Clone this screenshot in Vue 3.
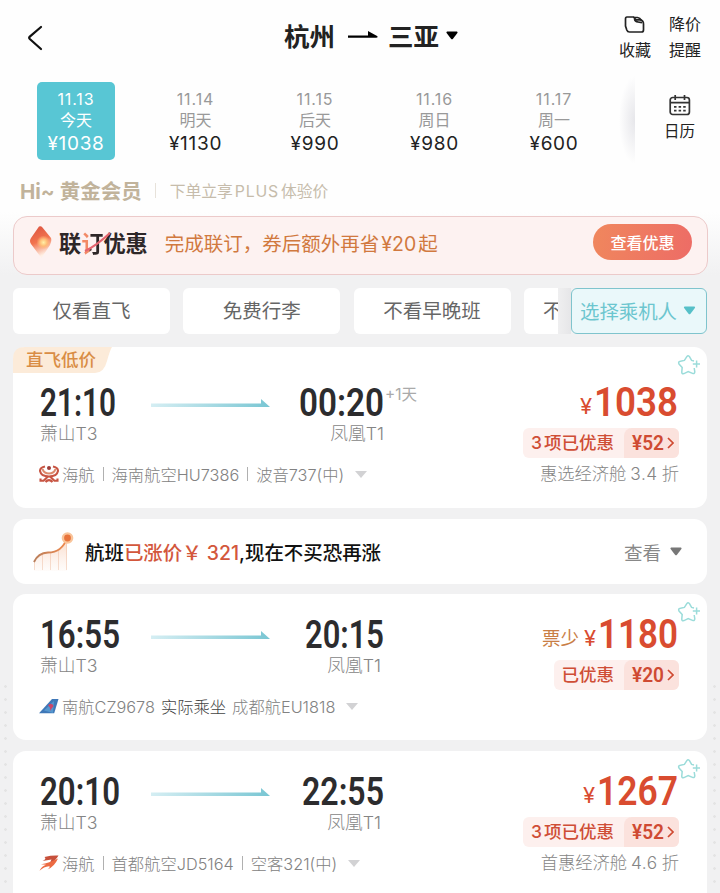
<template>
  <div class="page">
    <header class="header">
      <svg class="back" viewBox="0 0 16 26"><path d="M14 2 L2.8 11.6 Q1.6 12.8 2.8 14 L14 24" /></svg>
      <div class="route">
        <span>杭州</span>
        <svg class="route-arrow" viewBox="0 0 30 10"><path d="M0 5.4 H20 V1 L29.5 6.2 Q30 7.8 28 7.8 H0 Z" /></svg>
        <span>三亚</span>
        <svg class="route-caret" viewBox="0 0 12 9"><path d="M1 0.5 H11 Q12 1 11.4 2 L7 7.8 Q6 8.8 5 7.8 L0.6 2 Q0 1 1 0.5 Z" /></svg>
      </div>
      <div class="actions">
        <div class="action">
          <svg class="folder" viewBox="0 0 21 17">
            <path d="M3 1 H9.5 L12 3.8 H16 Q19.5 4 19.5 8 V14 Q19.5 16 17.5 16 H5.5 Q3.5 16 2.8 14 L1.5 10 V3 Q1.5 1 3 1 Z" />
            <path d="M9.5 1.5 H13.5 Q16 1.6 17.5 4.4 M10.5 3 Q11 5.5 14 6 L18 6.6" />
          </svg>
          <span>收藏</span>
        </div>
        <div class="action"><span>降价</span><span>提醒</span></div>
      </div>
    </header>

    <div class="dates">
      <div v-for="d in dates" :key="d.date" class="date" :class="{ active: d.active }">
        <span class="date-day">{{ d.date }}</span>
        <span class="date-week">{{ d.week }}</span>
        <span class="date-price">¥{{ d.price }}</span>
      </div>
      <div class="date-shadow"></div>
      <div class="calendar">
        <svg viewBox="0 0 22 22">
          <rect x="1.2" y="3.5" width="19.2" height="17" rx="2.5" />
          <path d="M1.2 8.7 H20.4 M6.2 1 V6 M15.5 1 V6" />
          <path d="M5 12.8 H7.5 M9.6 12.8 H12.1 M14.2 12.8 H16.7 M5 16.6 H7.5 M9.6 16.6 H12.1 M14.2 16.6 H16.7" />
        </svg>
        <span>日历</span>
      </div>
    </div>

    <div class="member">
      <span class="member-level">Hi~ 黄金会员</span>
      <i class="member-line"></i>
      <span class="member-tip">下单立享<em>PLUS</em>体验价</span>
    </div>

    <div class="promo">
      <svg class="promo-icon" viewBox="0 0 24 34">
        <defs>
          <linearGradient id="gem" x1="0" y1="0" x2="0.3" y2="1">
            <stop offset="0" stop-color="#d9503f" />
            <stop offset="0.55" stop-color="#f2744f" />
            <stop offset="1" stop-color="#fff1e6" />
          </linearGradient>
          <radialGradient id="glow">
            <stop offset="0" stop-color="#fff0a8" />
            <stop offset="0.5" stop-color="#ffbd76" />
            <stop offset="1" stop-color="#ffb27a" stop-opacity="0" />
          </radialGradient>
        </defs>
        <path d="M10 1.5 Q12 0.5 13.5 2.5 L22 13 Q23 16 21 20 L12.5 33 L2 19 Q0 16 2 13 Z" fill="url(#gem)" />
        <circle cx="14.5" cy="17.5" r="7" fill="url(#glow)" />
      </svg>
      <div class="promo-brand">
        <span>联</span><span class="brand-hot">订</span><span>优惠</span>
        <svg class="brand-slash" viewBox="0 0 28 20"><path d="M1 19 Q12 14 26 1" /></svg>
      </div>
      <span class="promo-text">完成联订，券后额外再省<em>¥20</em>起</span>
      <button class="promo-btn">查看优惠</button>
    </div>

    <div class="filters">
      <div class="filter-scroll">
        <span v-for="f in filters" :key="f" class="filter">{{ f }}</span>
        <span class="filter filter-cut">不</span>
      </div>
      <div class="filter-fade"></div>
      <div class="passenger">
        <span>选择乘机人</span>
        <svg viewBox="0 0 12 9"><path d="M1 0.5 H11 Q12 1 11.4 2 L7 7.8 Q6 8.8 5 7.8 L0.6 2 Q0 1 1 0.5 Z" /></svg>
      </div>
    </div>

    <div class="list">
      <template v-for="f in flights" :key="f.id">
        <div class="card" :class="{ tagged: f.tag, last: f.last }">
          <div v-if="f.tag" class="tag">
            <svg viewBox="0 0 100 26" preserveAspectRatio="none"><path d="M0 12 Q0 0 12 0 H99 Q97 3 94 14 Q91 26 82 26 H0 Z" /></svg>
            <span>{{ f.tag }}</span>
          </div>
          <svg class="star" viewBox="0 0 24 22">
            <path d="M17.2 14 L17.8 17.8 Q17.8 20.2 15.5 19.4 L11.2 17.6 L7 19.6 Q4.4 20.2 4.8 17.6 L5.2 13.4 L2 10 Q0.8 7.6 3.4 7.2 L7.4 6.4 L9.8 2.6 Q11.2 0.8 12.6 2.8 L14.6 6.4 L17 7" />
            <path d="M15.8 10 H23 M19.6 6.4 V13.4" />
          </svg>

          <div class="trip">
            <div class="times">
              <svg class="num depart" height="34" :width="f.departWidth"><text x="0" y="32" :textLength="f.departWidth" lengthAdjust="spacingAndGlyphs">{{ f.depart }}</text></svg>
              <svg class="arrow" viewBox="0 0 119 10">
                <defs>
                  <linearGradient :id="'line' + f.id" x1="0" y1="0" x2="1" y2="0">
                    <stop offset="0" stop-color="#d5eef3" />
                    <stop offset="1" stop-color="#79c6d3" />
                  </linearGradient>
                </defs>
                <path d="M0 5.5 H110 V1 L119 9 H0 Z" :fill="`url(#line${f.id})`" />
              </svg>
              <div class="arrive">
                <svg class="num" height="34" :width="f.arriveWidth"><text x="0" y="32" :textLength="f.arriveWidth" lengthAdjust="spacingAndGlyphs">{{ f.arrive }}</text></svg>
                <span v-if="f.nextDay" class="next-day">{{ f.nextDay }}</span>
              </div>
            </div>
            <div class="airports" :class="{ inset: !f.nextDay }"><span>萧山T3</span><span>凤凰T1</span></div>
            <div class="airline">
              <svg v-if="f.logo === 'hainan'" class="logo" viewBox="0 0 20 18">
                <g fill="none" stroke="#c85543" stroke-width="2.1">
                  <path d="M6 1.5 Q1 2.5 1 6 Q2 11.5 10 11.5 Q18 11.5 19 6 Q19 2.5 14 1.5" />
                  <path d="M3.5 4 Q5 8.5 10 8.5 Q15 8.5 16.5 4" stroke="#dc8a6c" />
                  <path d="M9 11.5 L4.5 15.8 H1.5 V13.5 M11 11.5 L15.5 15.8 H18.5 V13.5 M6.5 17 Q10 13.2 13.5 17" />
                </g>
                <circle cx="10" cy="3" r="2" fill="#9c3c38" />
              </svg>
              <svg v-else-if="f.logo === 'southern'" class="logo" viewBox="0 0 20 18">
                <path d="M0 16.2 L13 2 H19.5 L15.2 16.2 Z" fill="#3f78b8" />
                <path d="M5 13.5 L15 4 L14 16 Z" fill="#5597cf" />
                <path d="M9 8.5 Q11 5.4 13.6 7.6 Q15.5 9 13 11 L11 14 Q11.8 10 9 8.5 Z" fill="#cb4669" />
              </svg>
              <svg v-else class="logo" viewBox="0 0 20 18">
                <path d="M5.5 3 Q13 1.2 19.5 1.6 Q16 8 9 11 Q12 7.8 12.5 5.6 L3.5 7 Q8 4.8 5.5 3 Z" fill="#c7503b" />
                <path d="M2 10.2 Q10 9 19 4.5 Q15.5 12.5 8.5 15.5 Q12 12.6 10 12.2 Q5 12.6 0.5 16.8 Q2.6 12.2 7 10.8 Z" fill="#ec6a42" />
              </svg>
              <template v-for="(s, i) in f.segments" :key="i">
                <i v-if="s.line" class="bar"></i>
                <span :class="{ dark: s.dark, gap: s.gap }">{{ s.text }}</span>
              </template>
              <i class="small-caret"></i>
            </div>
          </div>

          <div class="fare">
            <div class="price">
              <span v-if="f.few" class="few">{{ f.few }}</span>
              <span class="yen">¥</span>
              <svg class="num price-num" height="36" :width="f.priceWidth"><text x="0" y="32" :textLength="f.priceWidth" lengthAdjust="spacingAndGlyphs">{{ f.price }}</text></svg>
            </div>
            <div class="discount">
              <span class="discount-label"><em v-if="f.count">{{ f.count }}</em>{{ f.label }}</span>
              <span class="discount-value">
                <svg class="num" width="33" height="20"><text x="0" y="17" textLength="32" lengthAdjust="spacingAndGlyphs">¥{{ f.off }}</text></svg>
                <svg class="chevron" viewBox="0 0 7 12"><path d="M1 1 L6 6 L1 11" /></svg>
              </span>
            </div>
            <div v-if="f.cabin" class="cabin">{{ f.cabin }}<em>{{ f.rate }}</em>折</div>
          </div>
        </div>

        <div v-if="f.alert" class="card alert">
          <svg class="trend" viewBox="0 0 42 42">
            <defs>
              <linearGradient id="rise" x1="0" y1="0" x2="0" y2="1">
                <stop offset="0" stop-color="#f3b08a" stop-opacity="0.7" />
                <stop offset="1" stop-color="#f8d3bd" stop-opacity="0.1" />
              </linearGradient>
              <linearGradient id="stroke" x1="0" y1="0" x2="1" y2="0">
                <stop offset="0" stop-color="#b97f5c" />
                <stop offset="1" stop-color="#f08a4e" />
              </linearGradient>
            </defs>
            <path d="M1 31 Q5 22 15 21.5 Q29 21.5 34 7 V40 H1 Z" fill="url(#rise)" opacity="0.7" />
            <path d="M1.5 31 V39 M9.5 24 V39 M17.5 22 V39 M25.5 20 V39 M33.5 10 V39" stroke="#eebb9e" stroke-width="0.8" opacity="0.6" />
            <path d="M1 31 Q5 22 15 21.5 Q29 21.5 34 7" fill="none" stroke="url(#stroke)" stroke-width="1.9" />
            <circle cx="34.5" cy="7" r="5.8" fill="#f9c59b" />
            <circle cx="34.5" cy="7" r="3.4" fill="#e8743c" />
          </svg>
          <span class="alert-text">航班<b>已涨价￥ 321</b>,现在不买恐再涨</span>
          <span class="alert-more">查看</span>
          <svg class="alert-caret" viewBox="0 0 12 9"><path d="M1 0.5 H11 Q12 1 11.4 2 L7 7.8 Q6 8.8 5 7.8 L0.6 2 Q0 1 1 0.5 Z" /></svg>
        </div>
      </template>
    </div>
  </div>
</template>

<script setup>
const dates = [
  { date: '11.13', week: '今天', price: 1038, active: true },
  { date: '11.14', week: '明天', price: 1130 },
  { date: '11.15', week: '后天', price: 990 },
  { date: '11.16', week: '周日', price: 980 },
  { date: '11.17', week: '周一', price: 600 },
]

const filters = ['仅看直飞', '免费行李', '不看早晚班']

const flights = [
  {
    id: 1,
    tag: '直飞低价',
    depart: '21:10',
    departWidth: 76,
    arrive: '00:20',
    arriveWidth: 85,
    nextDay: '+1天',
    logo: 'hainan',
    segments: [{ text: '海航' }, { text: '海南航空HU7386', line: true }, { text: '波音737(中)', line: true }],
    price: '1038',
    priceWidth: 84,
    count: 3,
    label: '项已优惠',
    off: 52,
    cabin: '惠选经济舱',
    rate: '3.4',
    alert: true,
  },
  {
    id: 2,
    depart: '16:55',
    departWidth: 80,
    arrive: '20:15',
    arriveWidth: 79,
    logo: 'southern',
    segments: [{ text: '南航CZ9678' }, { text: '实际乘坐', dark: true, gap: true }, { text: '成都航EU1818', gap: true }],
    few: '票少',
    price: '1180',
    priceWidth: 80,
    label: '已优惠',
    off: 20,
  },
  {
    id: 3,
    last: true,
    depart: '20:10',
    departWidth: 80,
    arrive: '22:55',
    arriveWidth: 82,
    logo: 'capital',
    segments: [{ text: '海航' }, { text: '首都航空JD5164', line: true }, { text: '空客321(中)', line: true }],
    price: '1267',
    priceWidth: 81,
    count: 3,
    label: '项已优惠',
    off: 52,
    cabin: '首惠经济舱',
    rate: '4.6',
  },
]
</script>

<style>
body {
  margin: 0;
  overflow: hidden;
}
</style>

<style scoped>
.page {
  position: relative;
  width: 720px;
  height: 893px;
  overflow: hidden;
  box-sizing: border-box;
  background: linear-gradient(#fefefe 0, #fefefe 212px, #f1f1f2 275px);
  font-family: Inter, "Noto Sans CJK SC", sans-serif;
  font-weight: 400;
  color: #222;
  white-space: nowrap;
}
.page::before,
.page::after {
  content: "";
  position: absolute;
  top: 680px;
  bottom: 0;
  width: 3px;
  left: 4px;
  background: radial-gradient(circle, #e4e4e4 1px, transparent 1.6px) 0 0 / 3px 13px repeat-y;
}
.page::after {
  left: 713px;
}
em,
i {
  font-style: normal;
}
.header {
  display: flex;
  align-items: center;
  height: 74px;
  padding: 0 19px 0 27px;
}
.back {
  width: 16px;
  height: 26px;
  margin-top: 2px;
  fill: none;
  stroke: #111;
  stroke-width: 2.2;
  stroke-linecap: round;
}
.route {
  display: flex;
  align-items: center;
  margin-left: 241px;
  font-size: 25.5px;
  font-weight: 700;
  line-height: 36px;
}
.route-arrow {
  width: 30px;
  height: 10px;
  margin: -5px 10px 0 13px;
}
.route-caret {
  width: 12px;
  height: 9px;
  margin: -4px 0 0 7px;
}
.actions {
  display: flex;
  gap: 18px;
  margin-left: auto;
  font-size: 16px;
  line-height: 26px;
}
.action {
  display: flex;
  flex-direction: column;
  align-items: center;
  height: 52px;
  margin-top: -1px;
}
.folder {
  width: 21px;
  height: 17px;
  margin: 5px 0 4px;
  fill: none;
  stroke: #222;
  stroke-width: 1.7;
}
.dates {
  display: flex;
  height: 97px;
  padding: 8px 0 0 37px;
  box-sizing: border-box;
}
.date {
  display: flex;
  flex: none;
  flex-direction: column;
  align-items: center;
  width: 78px;
  height: 78px;
  margin-right: 41.5px;
  padding-top: 7px;
  box-sizing: border-box;
  border-radius: 5px;
  color: #999;
}
.date-day {
  font-size: 16px;
  line-height: 20px;
  letter-spacing: 0.9px;
}
.date-week {
  font-size: 16px;
  line-height: 22px;
}
.date-price {
  font-size: 19px;
  line-height: 26px;
  letter-spacing: 0.7px;
  color: #222;
}
.date.active {
  background: #58c6d4;
  color: #fff;
}
.date.active .date-price {
  color: #fff;
}
.date-shadow {
  flex: none;
  width: 16px;
  height: 88px;
  margin: -6px 0 0 -16px;
  background: radial-gradient(ellipse 16px 44px at 100% 50%, #e6e6ea, rgba(255, 255, 255, 0));
}
.calendar {
  display: flex;
  flex: none;
  flex-direction: column;
  align-items: center;
  width: 90px;
  padding-top: 12px;
  font-size: 15.5px;
  line-height: 26px;
}
.calendar svg {
  width: 22px;
  height: 22px;
  margin-bottom: 3px;
  fill: none;
  stroke: #333;
  stroke-width: 1.7;
}
.member {
  display: flex;
  align-items: center;
  height: 38px;
  padding-left: 20px;
}
.member-level {
  font-size: 20.5px;
  font-weight: 700;
  color: #c1b39b;
}
.member-line {
  width: 1px;
  height: 15px;
  margin: 0 14px 0 13px;
  background: #e7e2da;
}
.member-tip {
  font-size: 15.8px;
  color: #c6bcab;
}
.member-tip em {
  margin: 0 2px;
  letter-spacing: 0.8px;
}
.promo {
  display: flex;
  align-items: center;
  width: 695px;
  height: 59px;
  margin: 7px 0 0 13px;
  padding: 0 15px 7px 15px;
  box-sizing: border-box;
  border: 1px solid #eccaca;
  border-radius: 14px;
  background: #fdf2f1;
}
.promo-icon {
  width: 24px;
  height: 34px;
}
.promo-brand {
  position: relative;
  margin-left: 6px;
  font-size: 22.2px;
  font-weight: 700;
  color: #2e2728;
}
.brand-hot {
  background: linear-gradient(90deg, #f28a66 35%, #2e2728 45%);
  background-clip: text;
  color: transparent;
}
.brand-slash {
  position: absolute;
  left: 25px;
  top: 6px;
  width: 28px;
  height: 20px;
  fill: none;
  stroke: #e56470;
  stroke-width: 2.2;
}
.promo-text {
  margin-left: 17px;
  font-size: 19.5px;
  color: #d1793f;
}
.promo-text em {
  margin: 0 2px;
}
.promo-btn {
  width: 99px;
  height: 36px;
  margin-left: auto;
  padding: 0;
  border: 0;
  border-radius: 18px;
  background: linear-gradient(100deg, #f0875d, #ed6c66);
  font-family: inherit;
  font-size: 16px;
  font-weight: 500;
  color: #fff;
}
.filters {
  display: flex;
  height: 46px;
  margin: 13px 13px 0;
}
.filter-scroll {
  display: flex;
  gap: 13.3px;
  width: 545px;
  overflow: hidden;
}
.filter {
  flex: none;
  width: 157px;
  height: 46px;
  border-radius: 6px;
  background: #fff;
  font-size: 19.5px;
  line-height: 47px;
  text-align: center;
  color: #666;
}
.filter-cut {
  padding-left: 19px;
  box-sizing: border-box;
  text-align: left;
}
.filter-fade {
  width: 13px;
  background: linear-gradient(90deg, #efeff0, #e6e6e8);
}
.passenger {
  display: flex;
  align-items: center;
  justify-content: center;
  width: 136px;
  padding: 0 2px 1px 0;
  box-sizing: border-box;
  border: 1.5px solid #7fc4cd;
  border-radius: 6px;
  background: #eaf8fa;
  font-size: 19.4px;
  color: #6cc6cf;
}
.passenger svg {
  width: 13px;
  height: 9px;
  margin-left: 6px;
  fill: #56c0c8;
}
.list {
  margin: 13px 13px 0;
}
.card {
  position: relative;
  display: flex;
  width: 694px;
  height: 146px;
  margin-bottom: 11px;
  padding: 22px 28px 0 27px;
  box-sizing: border-box;
  border-radius: 13px;
  background: #fff;
}
.card.tagged {
  height: 161px;
  padding-top: 37px;
}
.card.last {
  height: 200px;
}
.tag {
  position: absolute;
  left: 0;
  top: 0;
  width: 100px;
  height: 26px;
  font-size: 17.5px;
  font-weight: 500;
  line-height: 26px;
  color: #d98d45;
}
.tag svg {
  position: absolute;
  width: 100px;
  height: 26px;
  fill: #fcebd9;
}
.tag span {
  position: relative;
  left: 13px;
}
.star {
  position: absolute;
  top: 7px;
  right: 6px;
  width: 24px;
  height: 22px;
  fill: none;
  stroke: #9bdcda;
  stroke-width: 1.5;
}
.num {
  display: block;
  overflow: visible;
  font-family: Roboto, sans-serif;
  font-weight: 600;
  font-size: 39px;
  fill: #2c2c2e;
}
.trip {
  width: 344px;
}
.times {
  display: flex;
  height: 36px;
}
.depart {
  flex: none;
}
.arrow {
  position: absolute;
  left: 138px;
  width: 119px;
  height: 10px;
  margin-top: 14px;
}
.arrive {
  position: relative;
  margin-left: auto;
}
.next-day {
  position: absolute;
  left: 86px;
  top: 0;
  font-size: 15.5px;
  line-height: 22px;
  color: #aaa;
}
.airports {
  display: flex;
  justify-content: space-between;
  font-size: 17.8px;
  line-height: 28px;
  font-weight: 300;
  color: #858585;
}
.airports.inset {
  padding-right: 3px;
}
.airline {
  display: flex;
  align-items: center;
  height: 24px;
  margin-top: 14px;
  font-size: 16.3px;
  font-weight: 300;
  color: #828282;
}
.logo {
  flex: none;
  width: 20px;
  height: 18px;
  margin: 0 3px 0 -1px;
}
.bar {
  flex: none;
  width: 1px;
  height: 14px;
  margin: 0 8px;
  background: #b0b0b0;
}
.gap {
  margin-left: 6px;
}
.dark {
  color: #444;
}
.small-caret {
  margin-left: 11px;
  border: 6px solid transparent;
  border-top: 7px solid #d2d2d4;
  border-bottom: 0;
}
.fare {
  display: flex;
  flex-direction: column;
  align-items: flex-end;
  flex: 1;
}
.price {
  display: flex;
  height: 44px;
  margin-right: 1px;
  color: #d94c30;
}
.price-num {
  height: 36px;
  font-size: 41px;
  fill: #d94c30;
}
.yen {
  margin-right: 2px;
  font-size: 22px;
  line-height: 44px;
}
.few {
  margin-right: 5px;
  font-size: 18.5px;
  line-height: 45px;
  color: #c97e45;
}
.discount {
  display: flex;
  height: 30px;
  border-radius: 6px;
  overflow: hidden;
  background: #fdf0ee;
  color: #cf4e36;
}
.discount-label {
  padding: 0 10px 0 8px;
  font-size: 17.5px;
  font-weight: 500;
  line-height: 30px;
}
.discount-label em {
  margin-right: 2px;
}
.discount-value {
  display: flex;
  align-items: center;
  width: 55px;
  padding-left: 8px;
  box-sizing: border-box;
  border-top-left-radius: 8px;
  background: #fbe2dd;
}
.discount-value .num {
  margin-right: 2px;
  font-size: 20px;
  fill: #cf4a32;
}
.chevron {
  width: 7px;
  height: 12px;
  fill: none;
  stroke: #cf4a32;
  stroke-width: 1.7;
}
.cabin {
  margin-top: 3px;
  font-size: 17.3px;
  line-height: 26px;
  font-weight: 300;
  color: #858585;
}
.cabin em {
  margin: 0 4px;
  letter-spacing: 0.5px;
}
.alert {
  height: 65px;
  margin-bottom: 10px;
  padding: 0 25px 0 20px;
  align-items: center;
}
.trend {
  width: 42px;
  height: 42px;
}
.alert-text {
  margin-left: 10px;
  font-size: 19.45px;
  font-weight: 500;
  color: #111;
}
.alert-text b {
  font-weight: 500;
  color: #d3573c;
}
.alert-more {
  margin-left: auto;
  font-size: 18.5px;
  color: #888;
}
.alert-caret {
  width: 12px;
  height: 9px;
  margin-left: 9px;
  fill: #777;
}
</style>
